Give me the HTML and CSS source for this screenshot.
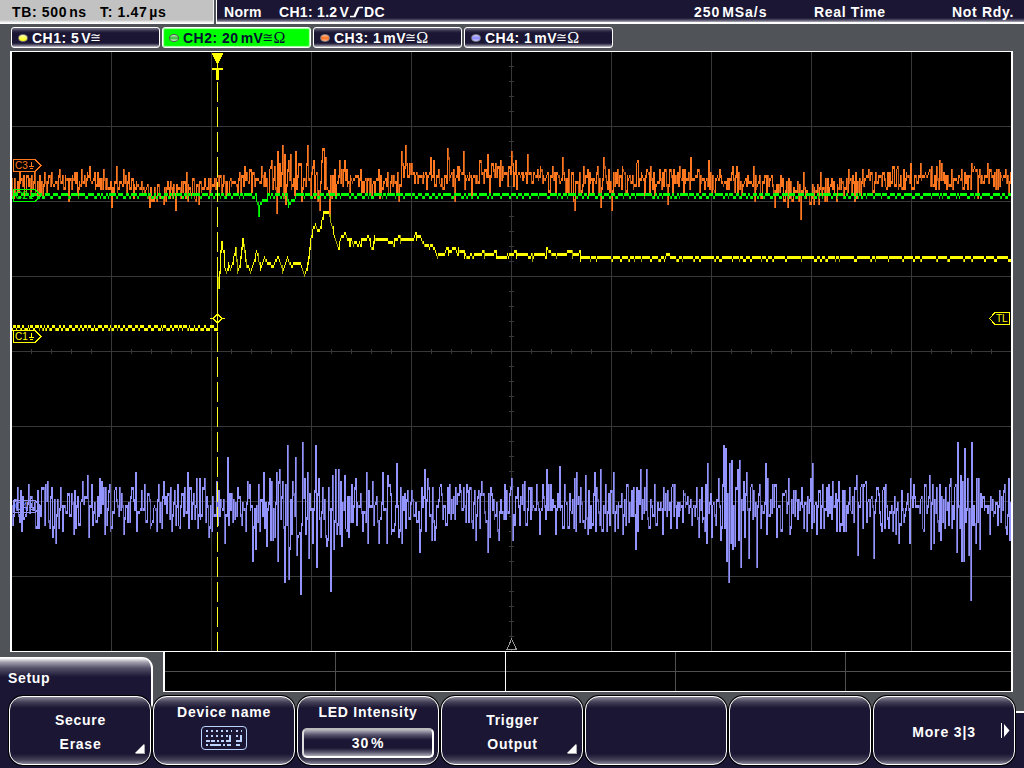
FILE: index.html
```
<!DOCTYPE html>
<html lang="en">
<head>
<meta charset="utf-8">
<title>Oscilloscope</title>
<link rel="stylesheet" href="styles.css">
</head>
<body>
<div class="scope">
  <header class="status">
    <div class="timebase"><span class="tb">TB: 500<i class="thin"></i>ns</span><span class="tpos">T: 1.47<i class="thin"></i>µs</span></div>
    <div class="trigger">
      <span class="norm">Norm</span>
      <span class="source">CH1: 1.2<i class="thin"></i>V<svg class="edge" width="14" height="12" viewBox="0 0 14 12"><path d="M0 10.500H5L9 1.500H13M4 10.500L8 1.500" fill="none" stroke="#fff" stroke-width="1.5"/></svg>DC</span>
      <span class="rate">250<i class="thin"></i>MSa/s</span>
      <span class="mode">Real Time</span>
      <span class="ready">Not Rdy.</span>
    </div>
  </header>
  <nav class="channels">
    <div class="chip"><i class="led yellow"></i><span>CH1: 5<i class="thin"></i>V</span><span class="coupling">≅</span></div>
    <div class="chip active"><i class="led green"></i><span>CH2: 20<i class="thin"></i>mV</span><span class="coupling">≅</span><span class="ohm">Ω</span></div>
    <div class="chip"><i class="led orange"></i><span>CH3: 1<i class="thin"></i>mV</span><span class="coupling">≅</span><span class="ohm">Ω</span></div>
    <div class="chip"><i class="led violet"></i><span>CH4: 1<i class="thin"></i>mV</span><span class="coupling">≅</span><span class="ohm">Ω</span></div>
  </nav>
  <main class="display">
    <svg class="plot" width="1003" height="601" viewBox="10 51 1003 601" shape-rendering="crispEdges">
      <rect x="10" y="51" width="1003" height="601" fill="#fff"/>
      <rect x="12" y="52" width="999" height="599" fill="#000"/>
      <path id="grid" fill="#383838"/>
      <g id="traces"></g>
      <path id="cursor" fill="#ffff20"/>
      <g fill="#ffff00">
        <path d="M212 53H223V55H222V57H221V59H220V61H219V63H216V61H215V59H214V57H213V55H212Z"/>
        <path d="M217 63H218V68H223V70H219V80H216V70H212V68H217Z"/>
      </g>
      <path d="M210 318.5H213L217.5 314L222 318.5H225M213 318.5L217.5 323L222 318.5" fill="none" stroke="#ff0"/>
      <g id="tags"></g>
      <g fill="none" stroke="#ffff00"><path d="M1009.5 312.5H995L989.5 318.5L995 324.5H1009.5Z" fill="#000"/></g>
      <text class="tag" x="996" y="322" fill="#ff0">TL</text>
      <path d="M511.5 639L507 649.5H516.5Z" fill="#000" stroke="#999"/>
    </svg>
  </main>
  <section class="lower">
    <div class="tab">Setup</div>
    <div class="overview"><i></i><i></i><i></i><i></i><i></i></div>
  </section>
  <footer class="softkeys">
    <button class="key two"><span class="secure">Secure</span><span class="erase">Erase</span><svg class="corner" width="10" height="10"><path d="M10 0V10H0Z" fill="#aaa"/><path d="M9 0V9H0Z" fill="#fff"/></svg></button>
    <button class="key one"><span>Device name</span>
      <svg class="keyboard" width="46" height="24" viewBox="0 0 46 24" fill="none" stroke="#bcd4ff"><rect x=".5" y=".5" width="45" height="23" rx="3.5"/><g stroke-width="2" stroke-dasharray="2 3"><path d="M5 5H31M5 10H28M35 5H41M35 10H38"/><path d="M5 15H9M10 15H14M16 15H18M20 15H23M25 15H30M35 15H39" stroke-dasharray="none"/><path d="M5 19H7M9 19H20M22 19H24M26 19H30M35 19H39" stroke-dasharray="none"/><path d="M29 9V16M40 9V16" stroke-dasharray="none"/></g></svg>
    </button>
    <button class="key one"><span>LED Intensity</span><span class="value">30<i class="thin"></i>%</span></button>
    <button class="key two"><span>Trigger</span><span>Output</span><svg class="corner" width="10" height="10"><path d="M10 0V10H0Z" fill="#aaa"/><path d="M9 0V9H0Z" fill="#fff"/></svg></button>
    <button class="key"></button>
    <button class="key"></button>
    <button class="key more"><span>More 3|3</span><svg class="next" width="9" height="16"><path d="M.5 0V15" stroke="#fff"/><path d="M3 1L8.500 7.500L3 14Z" fill="#fff"/></svg></button>
  </footer>
</div>
<script src="scope.js"></script>
</body>
</html>
```
FILE: styles.css
```
* { box-sizing: border-box; }
body { margin: 0; background: #505358; overflow: hidden; }
.scope { width: 1024px; height: 768px; display: flex; flex-direction: column; background: #505358; color: #fff; font: bold 14px/16px "Liberation Sans", Arial, sans-serif; letter-spacing: .65px; white-space: nowrap; }
.thin { display: inline-block; width: 2px; }
.status { display: flex; gap: 2px; height: 24px; flex: none; }
.timebase { width: 214px; padding: 4px 0 0 12px; display: grid; grid-template-columns: 88px 1fr; color: #000; background: linear-gradient(#c2c2c2 20px, #fff 23px); border-right: 1px solid #eee; }
.tb { letter-spacing: .65px; }
.tpos { letter-spacing: .65px; }
.trigger { flex: 1; padding: 4px 0 0 7px; display: grid; grid-template-columns: 55px 415px 120px 138px 1fr; border-left: 1px solid #fff; background: linear-gradient(#1a1633 18px, #514e66 20px, #b0aebb 22px, #fff 22px); }
.norm, .source { letter-spacing: .3px; }
.edge { vertical-align: -1px; margin: 0 0 0 1px; }
.rate { letter-spacing: .95px; }
.ready { letter-spacing: .7px; }
.channels { display: flex; gap: 2px; padding: 3px 0 0 11px; height: 27px; flex: none; }
.chip { width: 149px; height: 21px; display: flex; align-items: center; padding: 0 0 0 6px; border: 1px solid #fff; border-radius: 3px; letter-spacing: .5px; background: linear-gradient(#77748a, #302c46 3px, #1a1633 5px, #1a1633 15px, #5a576c 17px, #c8c7d0); }
.chip.active { background: #00ff00; color: #001030; box-shadow: inset 0 0 1px 1px #b8ffb8; }
.chip .coupling { font: 13px/16px "DejaVu Sans", sans-serif; letter-spacing: 0; width: 11px; margin-left: -1px; }
.chip .ohm { font: 16px/16px "Liberation Serif", serif; letter-spacing: 0; }
.led { width: 10px; height: 8px; margin-right: 4px; border-radius: 50%; border: 1px solid #77757c; flex: none; }
.yellow { background: linear-gradient(#ffffb0, #ff0); }
.green { background: linear-gradient(#d0efd0, #30b830, #d0ffd0); border-color: #555; }
.orange { background: linear-gradient(#ffc090, #ff7020, #ffb080); }
.violet { background: linear-gradient(#d0d0ff, #8a86ff, #c8c8ff); }
.display { padding-left: 10px; height: 601px; flex: none; }
.plot { display: block; }
.tag { font: 10px "Liberation Sans", sans-serif; letter-spacing: 0; }
.lower { display: flex; height: 43px; flex: none; }
.tab { position: relative; z-index: 1; top: 5px; width: 153px; height: 54px; padding: 12px 0 0 8px; border: 2px solid #fff; border-width: 1px 2px 0 0; border-radius: 0 11px 0 0; background: linear-gradient(#fff, #a5a3b0 4px, #55516a 10px, #1a1633 19px); }
.overview { margin-left: 10px; width: 850px; height: 40px; padding: 0; border: solid #fff; border-width: 0 2px 1px 2px; display: grid; grid-template-columns: 171px 170px 170px 170px 1fr; background: linear-gradient(#000 19px, #505050 19px, #505050 20px, #000 20px); }
.overview i { border-right: 1px solid #505050; }
.overview i:nth-child(2) { border-color: #fff; }
.overview i:last-child { border: 0; }
.softkeys { flex: 1; padding: 1px 0 0 9px; display: flex; gap: 2px; background: linear-gradient(90deg, #1a1633 9px, transparent 9px) , linear-gradient(#505358 16px, #fff 16px, #fff 18px, #1a1633 18px); }
.key { position: relative; z-index: 2; width: 142px; height: 69px; flex: none; display: flex; flex-direction: column; align-items: center; padding: 0; border: 1px solid #fff; border-radius: 14px; color: #fff; font: inherit; letter-spacing: .75px; box-shadow: 0 0 0 1px #000; background: linear-gradient(#8a8798, #454158 5px, #1a1633 11px, #1a1633 57px, #454158 63px, #8a8798); }
.key.two { justify-content: center; gap: 8px; padding: 2px 0 0 1px; }
.key.one { padding-top: 7px; }
.key.more { justify-content: center; letter-spacing: .85px; padding-top: 2px; }
.corner { position: absolute; right: 5px; bottom: 10px; }
.next { position: absolute; right: 4px; top: 26px; }
.keyboard { margin-top: 6px; }
.value { width: 132px; height: 30px; margin-top: 8px; line-height: 27px; border: 2px solid #ddd; border-color: #bbb #fff #fff #ddd; border-radius: 5px; background: linear-gradient(#b4b2be, #55516a 5px, #1a1633 10px, #1a1633 18px, #55516a 22px, #aaa8b5); }
```
FILE: scope.js
```
const LEFT = 12, RIGHT = 1011;
const NS = 'http://www.w3.org/2000/svg';
const el = (name, attrs, parent) => {
  const e = document.createElementNS(NS, name);
  for (const k in attrs) e.setAttribute(k, attrs[k]);
  parent.appendChild(e);
  return e;
};
let seed = 7431;
const rnd = () => (seed = (seed * 16807) % 2147483647) / 2147483647;

// graticule
let d = '';
for (let x = 111; x < 1011; x += 100) d += `M${x} 52h1v599h-1z`;
for (let y = 126; y < 651; y += 75) if (y !== 351) d += `M12 ${y}h999v1h-999z`;
d += 'M12 351h999v1h-999z';
for (let y = 66; y < 651; y += 15) d += `M509 ${y}h5v1h-5z`;
for (let x = 31; x < 1011; x += 20) d += `M${x} 349h1v5h-1z`;
document.getElementById('grid').setAttribute('d', d);

// trigger position line
d = '';
for (let y = 82; y < 651; y += 25) d += `M217 ${y}h1v${Math.min(20, 651 - y)}h-1z`;
document.getElementById('cursor').setAttribute('d', d);

// each column spans the previous level to the current one, in 3px level steps
function draw(levels, color, dimColor, base) {
  let bright = '', dim = '';
  for (let x = LEFT; x < RIGHT; x++) {
    const q = v => base + 3 * Math.round((v - base) / 3);
    const a = q(levels[x - 1] ?? levels[x]), b = q(levels[x]);
    let top = Math.min(a, b), h = Math.abs(a - b) + 3;
    if (Math.abs(a - b) <= 3) { top = b; h = 3; }
    const s = `M${x} ${top}h1v${h}h-1z`;
    if (b > a && rnd() < .6) dim += s; else bright += s;
  }
  const g = document.getElementById('traces');
  el('path', { d: bright, fill: color }, g);
  el('path', { d: dim, fill: dimColor }, g);
}
function noise(mean, up, down, spikes) {
  const v = [];
  let side = 1;
  for (let x = LEFT - 1; x < RIGHT;) {
    side = rnd() < .72 ? -side : side;
    const y = mean(x) + (side > 0 ? down(x) : -up(x)) * Math.pow(rnd(), 1.3);
    const n = rnd() < .15 ? 2 : 1;
    for (let k = 0; k < n; k++) v[x++] = y;
  }
  for (const [x, t, b] of spikes) {
    if (t) v[x - 1] = t;
    if (b) v[t ? x : x - 1] = b - 3;
  }
  return v;
}
function interp(points, x) {
  for (let i = 1; i < points.length; i++) {
    const [x0, y0] = points[i - 1], [x1, y1] = points[i];
    if (x <= x1) return y0 + (y1 - y0) * (x - x0) / (x1 - x0);
  }
  return points[points.length - 1][1];
}

const c4 = [[21,490,532],[29,484,514],[38,490,528],[48,481,522],[52,487,537],[56,0,543],[62,505,532],[73,502,535],[83,481,505],[88,475,538],[92,483,525],[100,478,515],[102,481,505],[104,487,535],[110,484,532],[116,487,0],[120,487,512],[124,0,535],[136,472,532],[142,490,510],[164,481,505],[172,0,531],[175,490,525],[188,472,528],[197,478,530],[200,478,520],[205,478,522],[209,0,538],[217,481,525],[225,0,543],[228,457,526],[238,487,0],[246,0,532],[248,481,0],[252,505,562],[256,0,550],[264,472,528],[267,0,547],[270,478,540],[272,481,540],[277,472,562],[280,469,520],[285,0,583],[288,445,580],[290,0,550],[293,481,0],[296,457,556],[301,0,595],[303,442,500],[305,478,535],[308,472,558],[313,0,543],[316,445,568],[319,478,520],[327,0,547],[331,0,592],[333,475,550],[336,469,535],[339,469,0],[341,481,547],[345,475,0],[349,0,538],[352,484,0],[356,478,525],[363,0,532],[367,472,544],[373,481,525],[379,0,543],[383,472,510],[387,0,543],[388,475,0],[392,0,535],[397,463,508],[399,0,538],[401,487,543],[408,490,0],[412,490,0],[420,0,553],[425,469,532],[428,478,0],[432,0,541],[435,0,541],[441,484,0],[450,484,520],[460,484,0],[464,487,0],[475,490,541],[482,481,0],[488,0,553],[490,0,538],[491,487,0],[499,0,541],[512,478,541],[525,481,0],[540,0,535],[547,469,512],[556,0,535],[560,466,512],[575,478,532],[577,472,0],[586,475,0],[588,0,535],[595,472,532],[601,469,532],[606,484,532],[614,472,532],[623,0,535],[636,0,550],[637,487,532],[641,469,520],[647,469,520],[663,0,535],[672,487,0],[697,487,0],[699,0,538],[707,0,543],[708,463,514],[712,0,538],[719,478,508],[721,0,541],[724,445,528],[726,448,562],[729,0,583],[730,463,544],[732,460,550],[735,0,547],[738,469,540],[740,460,568],[744,481,538],[747,472,510],[749,0,558],[757,0,568],[760,484,0],[766,463,535],[768,478,0],[777,0,538],[789,478,535],[802,487,0],[811,478,0],[813,463,523],[817,0,535],[823,484,528],[833,481,0],[839,481,532],[843,490,532],[845,490,532],[857,475,556],[866,481,522],[872,496,0],[874,0,558],[884,487,0],[896,0,535],[899,0,543],[910,0,543],[911,478,0],[914,484,0],[930,475,550],[934,0,543],[937,487,0],[940,484,541],[951,478,528],[957,0,553],[958,442,508],[961,475,562],[963,481,562],[965,448,523],[968,478,556],[971,0,601],[972,442,526],[976,0,543],[977,478,0],[979,478,550],[990,0,535],[1005,484,0],[1007,0,535],[1009,478,541]];
const c3 = [[20,171,185],[35,171,195],[40,175,192],[52,173,0],[60,170,0],[69,0,201],[75,171,0],[82,170,185],[90,166,182],[95,172,0],[104,169,0],[112,0,207],[117,166,192],[124,170,0],[150,0,207],[164,0,205],[176,0,210],[187,172,0],[199,0,204],[205,177,0],[245,166,182],[262,166,0],[272,160,190],[277,0,213],[278,151,197],[283,145,200],[285,155,204],[291,154,190],[296,151,190],[301,164,202],[308,145,180],[314,160,200],[318,0,202],[320,0,210],[323,148,198],[324,148,190],[326,158,190],[330,0,213],[335,170,195],[340,160,0],[345,160,0],[361,169,0],[367,0,193],[379,169,198],[388,172,195],[399,0,201],[402,151,165],[406,145,165],[412,163,175],[431,157,180],[434,160,0],[448,148,160],[455,0,201],[464,151,0],[472,0,195],[481,160,0],[488,154,0],[490,0,195],[501,160,180],[512,151,165],[516,160,190],[528,154,0],[541,166,0],[549,0,193],[553,166,0],[563,157,175],[569,169,195],[574,200,211],[584,166,0],[588,170,197],[598,166,195],[601,0,208],[604,157,170],[612,0,211],[618,169,0],[623,166,0],[637,163,0],[638,160,0],[645,0,195],[655,0,197],[660,169,0],[668,0,205],[680,167,0],[691,157,180],[709,160,190],[720,169,0],[733,166,0],[737,166,0],[754,166,202],[768,175,0],[775,0,208],[783,178,0],[788,0,208],[801,0,220],[804,172,0],[819,0,205],[821,172,0],[837,0,201],[849,169,185],[855,0,201],[863,169,0],[869,169,0],[898,166,0],[911,163,0],[921,163,180],[930,170,0],[940,160,180],[942,163,180],[952,169,190],[972,163,0],[978,0,198],[980,169,185],[988,163,185],[999,170,0],[1008,175,193]];
const c1 = [[217,276],[218,285],[219,270],[220,250],[221,241],[223,250],[224,264],[226,270],[228,263],[230,269],[232,262],[235,247],[237,270],[239,265],[242,238],[244,250],[246,265],[248,264],[250,270],[252,265],[256,250],[258,258],[260,267],[264,257],[268,263],[273,264],[278,255],[282,270],[287,257],[291,264],[295,262],[299,262],[301,264],[304,275],[306,268],[308,255],[310,238],[313,225],[315,224],[318,230],[320,225],[323,212],[328,212],[331,222],[333,232],[336,241],[338,246],[341,234],[345,233],[349,240],[353,243],[355,240],[358,245],[361,239],[368,236],[371,246],[373,239],[388,239],[392,242],[395,239],[410,239],[417,235],[420,236],[425,245],[432,244],[437,252],[440,253],[448,250],[455,247],[458,251],[462,249],[466,256],[470,254],[495,254],[503,257],[508,254],[512,252],[515,254],[527,254],[530,257],[536,252],[544,253],[548,249],[552,253],[560,254],[568,251],[575,253],[585,256],[665,256],[666,254],[669,254],[672,257],[1011,257]];
const swell = [[12,182],[35,184],[60,181],[130,183],[160,190],[200,186],[250,179],[320,178],[350,178],[390,184],[410,168],[420,177],[450,174],[470,177],[480,170],[510,173],[580,181],[640,177],[700,178],[780,184],[800,192],[850,184],[900,176],[1011,176]];

draw(noise(x => interp(swell, x), x => x > 260 && x < 340 ? 18 : 10, x => x > 260 && x < 340 ? 18 : 13, c3), '#ff7820', '#bb581a', 181);
draw(noise(() => 505, x => x > 262 && x < 345 ? 28 : 22, x => x > 262 && x < 345 ? 36 : 25, c4), '#9494ff', '#6868b4', 505);

const green = [], yellow = [];
for (let x = LEFT - 1, g = 193, y = 325, n = 0, m = 0; x < RIGHT; x++) {
  if (n-- <= 0) { g = g === 193 ? 196 : 193; n = g === 193 ? 1 + Math.floor(rnd() * 7) : Math.floor(rnd() * 3); }
  if (m-- <= 0) {
    y = y === 325 ? 328 : 325;
    m = x < 217 ? Math.floor(rnd() * 4) : (y === 325 ? 2 + Math.floor(rnd() * 12) : Math.floor(rnd() * 3));
  }
  green[x] = g;
  yellow[x] = x < 217 ? y : interp(c1, x) + (x > 340 && y === 328 ? (x > 585 || x % 4 < 2 ? 3 : -3) : 0);
}
[[256,199],[257,202],[258,214],[259,205],[260,202],[261,202],[262,199],[263,199],[264,199],[265,199],[266,199],[287,199],[288,205],[289,202],[290,202],[291,199],[292,199],[293,199],[294,199]].forEach(([x, y]) => { green[x] = y; });
draw(green, '#00ff00', '#00d000', 193);
draw(yellow, '#ffff00', '#aaaa00', 256);

[['C3', 159, '#ff7820'], ['C2', 189, '#00ff00'], ['C1', 330, '#ffff00'], ['C4', 500, '#9494ff']].forEach(([name, y, color]) => {
  const g = document.getElementById('tags');
  el('path', { d: `M13.500 ${y + .5}H35L41 ${y + 6.500}L35 ${y + 12.500}H13.500Z`, fill: 'none', stroke: color }, g);
  el('text', { class: 'tag', x: 15, y: y + 10, fill: color }, g).textContent = name;
  el('path', { d: `M31.500 ${y + 3}V${y + 7}M29 ${y + 7.500}H34M30 ${y + 9.500}H33`, fill: 'none', stroke: color }, g);
});
```
